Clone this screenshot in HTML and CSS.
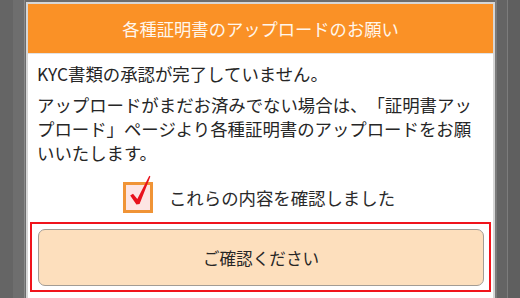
FILE: index.html
```html
<!DOCTYPE html>
<html lang="ja">
<head>
<meta charset="utf-8">
<link rel="stylesheet" href="styles.css">
</head>
<body>
<div class="page">
  <div class="modal">
    <div class="header">各種証明書のアップロードのお願い</div>
    <div class="content">
      <p class="lead">KYC書類の承認が完了していません。</p>
      <p class="msg">アップロードがまだお済みでない場合は、「証明書アップロード」ページより各種証明書のアップロードをお願いいたします。</p>
      <div class="check-row">
        <span class="box">
          <svg class="tick" width="30" height="30" viewBox="0 0 30 30">
            <path d="M7.2 13.6 L10 11.8 L14.3 17 L26.3 -6.3 L27.4 -5.6 L16.6 21.9 L13.4 22.4 Z" fill="#e8121c"/>
          </svg>
        </span>
        <span class="label">これらの内容を確認しました</span>
      </div>
    </div>
    <div class="action">
      <div class="button">ご確認ください</div>
    </div>
  </div>
</div>
</body>
</html>
```

FILE: styles.css
```css
html, body {
  margin: 0;
  padding: 0;
}
body {
  width: 520px;
  height: 298px;
  overflow: hidden;
  background-color: #6c6c6c;
  background-image:
    linear-gradient(to right, #656565 0, #656565 13px, #6e6e6e 13px, #6e6e6e 24px, #8a8a8a 24px, #8a8a8a 25px, transparent 25px),
    linear-gradient(to right, transparent 495px, #7a7a7a 495px, #7a7a7a 497px, #646464 497px, #646464 507px, #7c7c7c 507px, #7c7c7c 508px, #5f5f5f 508px);
  font-family: "Noto Sans CJK JP", "Noto Sans", sans-serif;
  text-spacing-trim: space-all;
}
.page {
  padding: 2px 25px 0 26px;
}
.modal {
  background: #ffffff;
  border: 2px solid #d6d6d6;
  border-bottom: none;
  height: 296px;
  box-sizing: border-box;
}
.header {
  height: 49px;
  background: #fa9126;
  color: #fff6ec;
  font-size: 17.3px;
  display: flex;
  align-items: center;
  justify-content: center;
  border-bottom: 1px solid #e2e2e2;
}
.content {
  padding: 8px 12px 0 9px;
  color: #262626;
  font-size: 17.4px;
}
.content p {
  margin: 0;
  line-height: 24px;
}
.msg {
  margin-top: 7px !important;
}
.check-row {
  display: flex;
  align-items: center;
  justify-content: center;
  gap: 16px;
  margin-top: 17px;
  height: 31px;
}
.box {
  position: relative;
  width: 30px;
  height: 31px;
  box-sizing: border-box;
  border: 3px solid #f09436;
  background: #fde5e3;
}
.tick {
  position: absolute;
  left: -3px;
  top: -3px;
  overflow: visible;
}
.label {
  font-size: 17.4px;
  color: #2a2a2a;
}
.action {
  margin: 9px 0 0 2px;
  width: 461px;
  height: 70px;
  box-sizing: border-box;
  border: 2px solid #f0141c;
  padding: 5px 5px 4px 6px;
}
.button {
  height: 57px;
  box-sizing: border-box;
  border: 1.5px solid #a39c94;
  border-radius: 7px;
  background: #fddfbd;
  display: flex;
  align-items: center;
  justify-content: center;
  font-size: 16.6px;
  color: #262626;
}
```
